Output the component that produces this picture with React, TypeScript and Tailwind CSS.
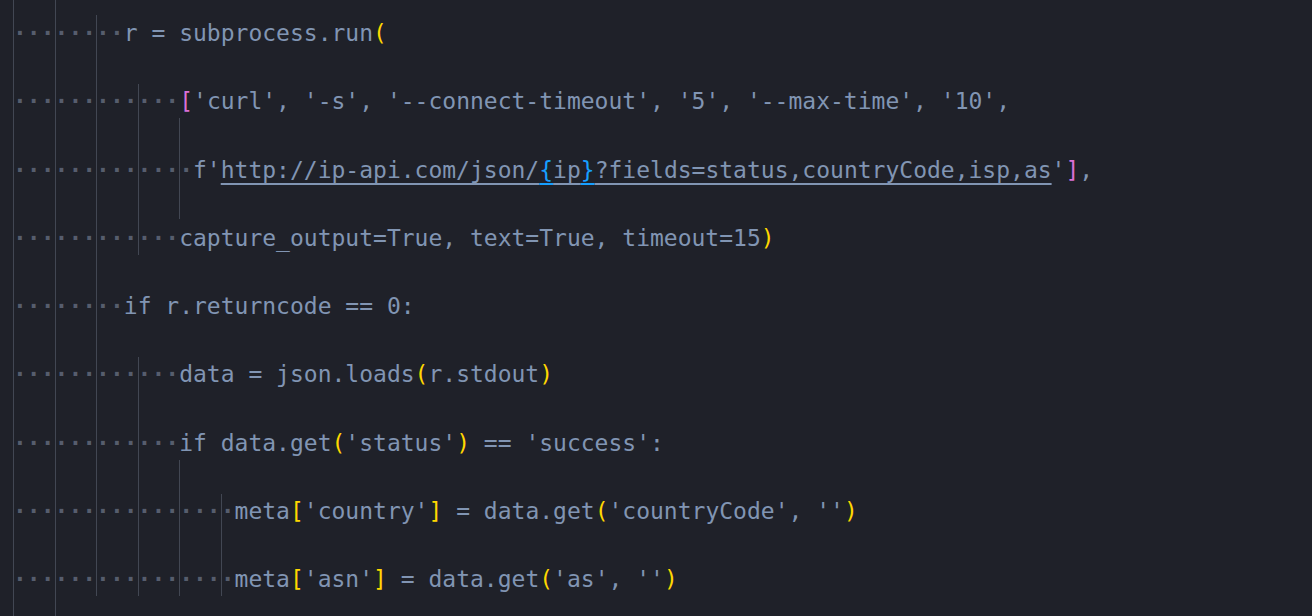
import React from "react";

type Seg = [string, string?];

const Y = "text-[#ffd700]";
const P = "text-[#da70d6]";
const B = "text-[#179fff]";

const lines: { indent: number; segs: Seg[] }[] = [
  { indent: 8, segs: [["r = subprocess.run"], ["(", Y]] },
  {
    indent: 12,
    segs: [["[", P], ["'curl', '-s', '--connect-timeout', '5', '--max-time', '10',"]],
  },
  {
    indent: 13,
    segs: [
      ["f'"],
      ["http://ip-api.com/json/", "underline"],
      ["{", `${B} underline decoration-[#179fff]`],
      ["ip", "underline"],
      ["}", `${B} underline decoration-[#179fff]`],
      ["?fields=status,countryCode,isp,as", "underline"],
      ["'"],
      ["]", P],
      [","],
    ],
  },
  { indent: 12, segs: [["capture_output=True, text=True, timeout=15"], [")", Y]] },
  { indent: 8, segs: [["if r.returncode == 0:"]] },
  { indent: 12, segs: [["data = json.loads"], ["(", Y], ["r.stdout"], [")", Y]] },
  {
    indent: 12,
    segs: [["if data.get"], ["(", Y], ["'status'"], [")", Y], [" == 'success':"]],
  },
  {
    indent: 16,
    segs: [
      ["meta"],
      ["[", Y],
      ["'country'"],
      ["]", Y],
      [" = data.get"],
      ["(", Y],
      ["'countryCode', ''"],
      [")", Y],
    ],
  },
  {
    indent: 16,
    segs: [
      ["meta"],
      ["[", Y],
      ["'asn'"],
      ["]", Y],
      [" = data.get"],
      ["(", Y],
      ["'as', ''"],
      [")", Y],
    ],
  },
];

// indent guides: column, top, bottom
const guides: [number, number, number][] = [
  [0, 0, 616],
  [3, 0, 616],
  [6, 15, 596],
  [9, 84, 255],
  [12, 118, 219],
  [9, 357, 596],
  [12, 460, 596],
  [15, 494, 596],
];

const CW = 13.87;

export default function App() {
  return (
    <div className="relative w-[1312px] h-[616px] overflow-hidden bg-[#1f2129] font-['DejaVu_Sans_Mono',monospace] text-[23px] text-[#8195b3]">
      <div className="flex flex-col pl-[13px] -mt-px">
        {lines.map((l, i) => (
          <div key={i} className="h-[68.25px] leading-[68.25px] whitespace-pre">
            <span className="text-[#565d6d] font-bold">{"\u00b7".repeat(l.indent)}</span>
            {l.segs.map(([t, c], j) => (
              <span
                key={j}
                className={`${c ?? ""} decoration-2 underline-offset-[5px] ${
                  c && c.includes("underline") && !c.includes("decoration-[") ? "decoration-[#8195b3]" : ""
                }`}
              >
                {t}
              </span>
            ))}
          </div>
        ))}
      </div>
      {guides.map(([col, top, bottom], i) => (
        <div
          key={i}
          className="absolute w-px bg-[#424753]"
          style={{ left: Math.round(13 + col * CW), top, height: bottom - top }}
        />
      ))}
    </div>
  );
}
